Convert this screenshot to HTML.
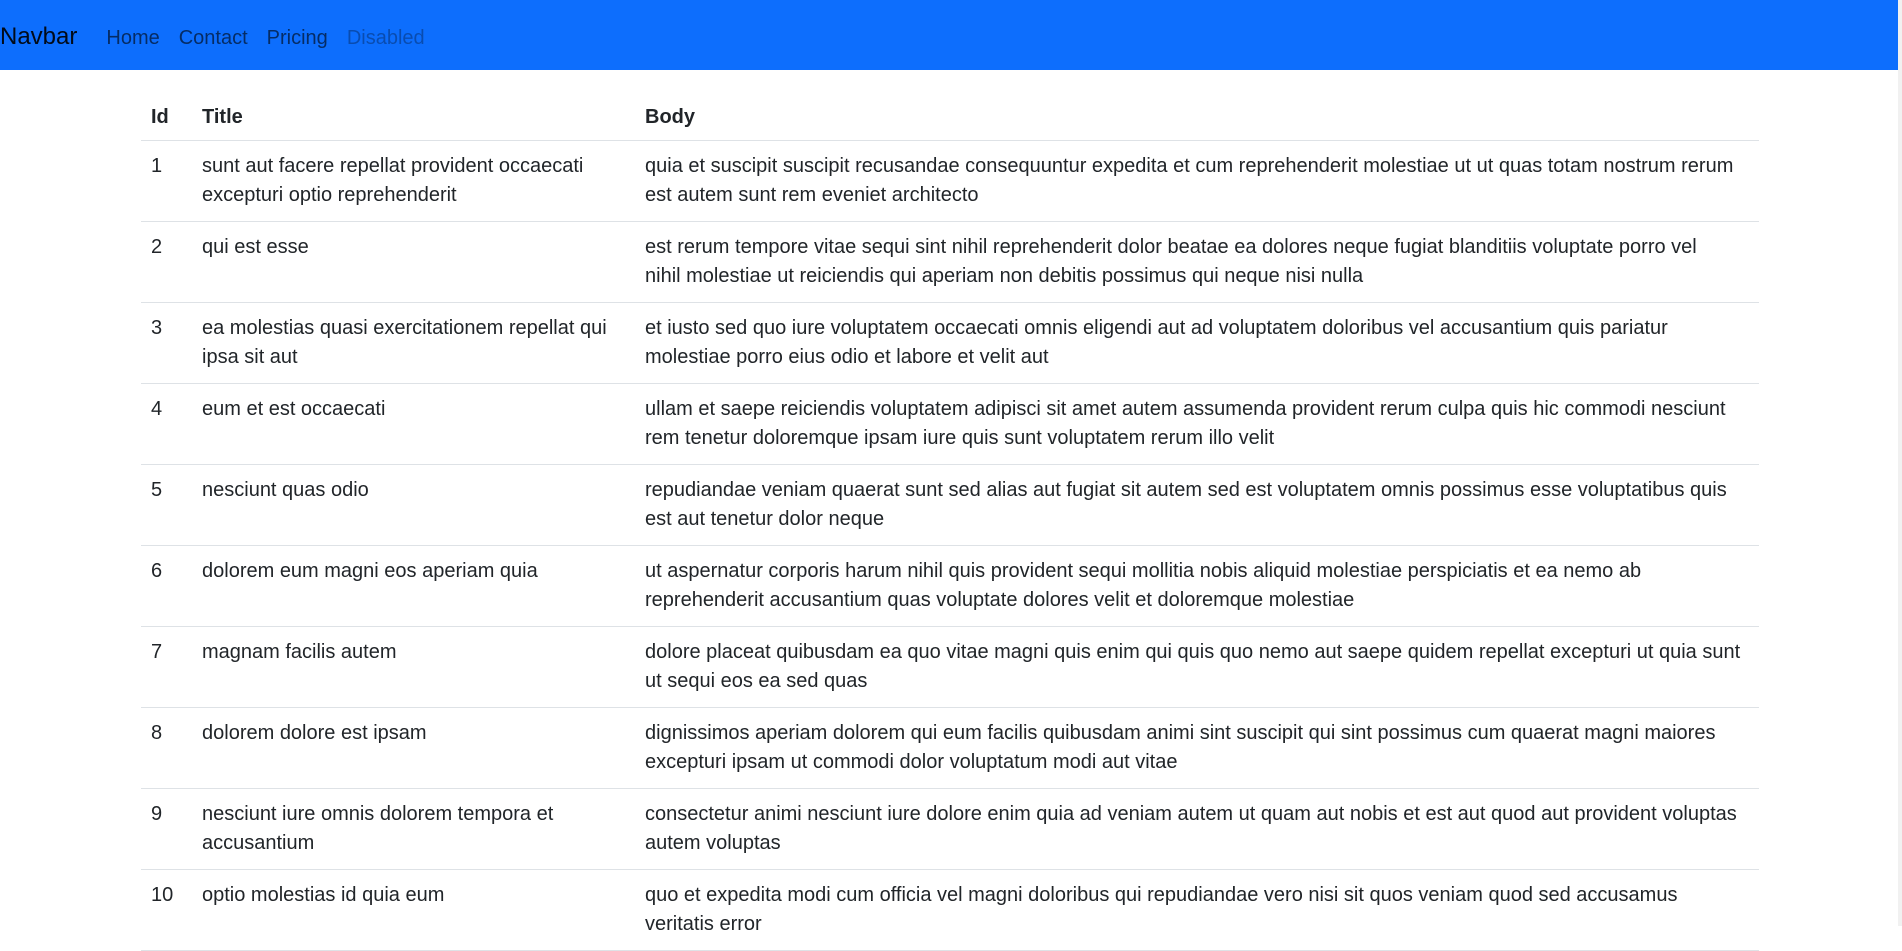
<!DOCTYPE html>
<html><head><meta charset="utf-8"><style>
html,body{margin:0;padding:0;width:1902px;height:926px;overflow:hidden;background:#fff;font-family:"Liberation Sans",sans-serif;color:#212529}
.nav{height:70px;background:#0d6efd;display:flex;align-items:center;position:relative}
.brand{font-size:24px;color:rgba(0,0,0,.9);margin-left:0;margin-right:29px;position:relative;top:2px}
.nav a{font-size:20px;color:rgba(0,0,0,.6);margin-right:19px;text-decoration:none;position:relative;top:3px}
.nav a.dis{color:rgba(0,0,0,.3)}
table{position:absolute;left:141px;top:94px;width:1618px;border-collapse:collapse;font-size:20px;line-height:29px}
td,th{vertical-align:top;text-align:left;border-bottom:1px solid #dee2e6;white-space:nowrap}
th{font-weight:bold;padding:9px 10px 8px}
td{padding:11px 10px 11px}
.sb{position:absolute;right:0;top:0;width:4px;height:926px;background:#f1f1f1}
</style></head><body>
<div class="nav"><span class="brand">Navbar</span><a>Home</a><a>Contact</a><a>Pricing</a><a class="dis">Disabled</a></div>
<table>
<colgroup><col style="width:51px"><col style="width:443px"><col></colgroup>
<tr><th>Id</th><th>Title</th><th>Body</th></tr>
<tr><td>1</td><td>sunt aut facere repellat provident occaecati<br>excepturi optio reprehenderit</td><td>quia et suscipit suscipit recusandae consequuntur expedita et cum reprehenderit molestiae ut ut quas totam nostrum rerum<br>est autem sunt rem eveniet architecto</td></tr>
<tr><td>2</td><td>qui est esse</td><td>est rerum tempore vitae sequi sint nihil reprehenderit dolor beatae ea dolores neque fugiat blanditiis voluptate porro vel<br>nihil molestiae ut reiciendis qui aperiam non debitis possimus qui neque nisi nulla</td></tr>
<tr><td>3</td><td>ea molestias quasi exercitationem repellat qui<br>ipsa sit aut</td><td>et iusto sed quo iure voluptatem occaecati omnis eligendi aut ad voluptatem doloribus vel accusantium quis pariatur<br>molestiae porro eius odio et labore et velit aut</td></tr>
<tr><td>4</td><td>eum et est occaecati</td><td>ullam et saepe reiciendis voluptatem adipisci sit amet autem assumenda provident rerum culpa quis hic commodi nesciunt<br>rem tenetur doloremque ipsam iure quis sunt voluptatem rerum illo velit</td></tr>
<tr><td>5</td><td>nesciunt quas odio</td><td>repudiandae veniam quaerat sunt sed alias aut fugiat sit autem sed est voluptatem omnis possimus esse voluptatibus quis<br>est aut tenetur dolor neque</td></tr>
<tr><td>6</td><td>dolorem eum magni eos aperiam quia</td><td>ut aspernatur corporis harum nihil quis provident sequi mollitia nobis aliquid molestiae perspiciatis et ea nemo ab<br>reprehenderit accusantium quas voluptate dolores velit et doloremque molestiae</td></tr>
<tr><td>7</td><td>magnam facilis autem</td><td>dolore placeat quibusdam ea quo vitae magni quis enim qui quis quo nemo aut saepe quidem repellat excepturi ut quia sunt<br>ut sequi eos ea sed quas</td></tr>
<tr><td>8</td><td>dolorem dolore est ipsam</td><td>dignissimos aperiam dolorem qui eum facilis quibusdam animi sint suscipit qui sint possimus cum quaerat magni maiores<br>excepturi ipsam ut commodi dolor voluptatum modi aut vitae</td></tr>
<tr><td>9</td><td>nesciunt iure omnis dolorem tempora et<br>accusantium</td><td>consectetur animi nesciunt iure dolore enim quia ad veniam autem ut quam aut nobis et est aut quod aut provident voluptas<br>autem voluptas</td></tr>
<tr><td>10</td><td>optio molestias id quia eum</td><td>quo et expedita modi cum officia vel magni doloribus qui repudiandae vero nisi sit quos veniam quod sed accusamus<br>veritatis error</td></tr>
</table>
<div class="sb"></div>
</body></html>
